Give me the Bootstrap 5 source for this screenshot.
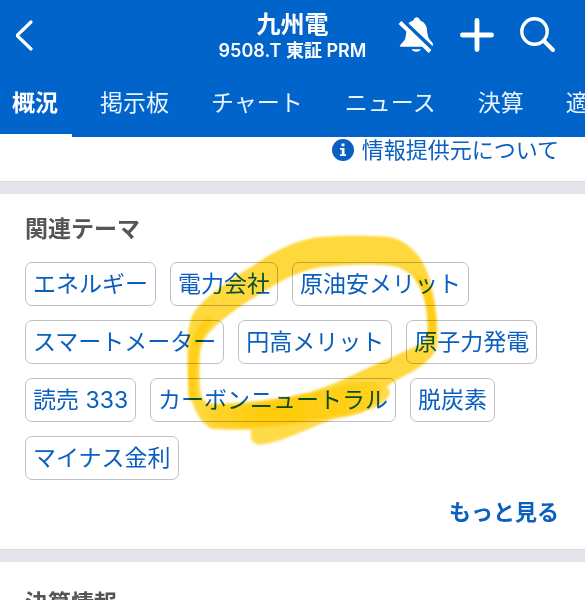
<!DOCTYPE html>
<html lang="ja">
<head>
<meta charset="utf-8">
<meta name="viewport" content="width=device-width, initial-scale=1">
<title>九州電 9508.T</title>
<link href="https://cdn.jsdelivr.net/npm/bootstrap@5.3.0/dist/css/bootstrap.min.css" rel="stylesheet">
<style>
body{font-family:Inter,"Noto Sans CJK JP",sans-serif;color:#555;background:#fff}
.app-head{background:#0064cb;color:#fff}
.title-bar{display:grid;grid-template-columns:1fr auto 1fr;height:70px}
.icon-btn{background:none;border:0;padding:0;color:#fff;line-height:0}
.actions{gap:25px;padding-right:29px}
.stock-name{font-size:24px;line-height:28px;font-weight:700;margin:0}
.stock-code{font-size:18px;line-height:24px;font-weight:600}
.tab-row{gap:16px;height:67px}
.tab-row a{color:#e9f3ff;font-size:23px;line-height:62px;padding:2px 14px 0 12px;white-space:nowrap;text-decoration:none;border-bottom:3px solid transparent}
.tab-row a.active{color:#fff;font-weight:700;border-color:#fff}
.info-row{height:44px;padding:0 26px}
.info-row a{font-size:22px;line-height:26px;gap:8px}
.blue-link{color:#0a5fc0;text-decoration:none}
.band{height:13px;background:#e5e4ea;border-top:1px solid #d9d9dd}
.panel{padding:18px 25px 20px}
.panel-title{font-size:23px;line-height:34px;font-weight:700;margin:0 0 16px}
.tags{gap:14px}
.tag{color:#0a5fc0;font-size:23px;line-height:42px;padding:0 7px;border:1px solid #bfbfc5;border-radius:7px;text-decoration:none;white-space:nowrap}
.more{font-size:22px;line-height:34px;font-weight:700;margin:15px 1px 0}
.marker{left:160px;top:26px;mix-blend-mode:multiply;pointer-events:none}
</style>
<script src="https://cdn.jsdelivr.net/npm/bootstrap@5.3.0/dist/js/bootstrap.bundle.min.js"></script>
</head>
<body class="vh-100 overflow-hidden">
<header class="app-head">
  <div class="title-bar align-items-center">
    <button class="icon-btn text-start ps-3" type="button" aria-label="戻る">
      <svg width="20" height="32" viewBox="0 0 20 32" fill="none" stroke="currentColor" stroke-width="3.2" stroke-linecap="round" stroke-linejoin="round"><path d="M15 3 1 16.500 15 30"/></svg>
    </button>
    <div class="text-center text-nowrap pt-1">
      <h1 class="stock-name">九州電</h1>
      <div class="stock-code">9508.T 東証 PRM</div>
    </div>
    <div class="d-flex justify-content-end actions">
      <button class="icon-btn" type="button" aria-label="通知オフ">
        <svg width="36" height="36" viewBox="0 0 36 36"><path fill="currentColor" d="M2 29.800c-1-1.600 3.500-4.500 5-7.500 1.300-3 .8-8 2-11C10.300 7 12.500 4.800 15.500 3.500c.4-2 1.600-3 3.200-3s2.800 1 3.200 3c4.500 1.500 6.800 5.500 7.100 10 .2 5 1.200 8.200 4.700 11.500 1.700 1.800 1.300 4.800-.5 4.800H3c-.5 0-.8-.2-1-.5zM13.500 32.300h9.500c-1.200 3.200-8.300 3.200-9.500 0z"/><path fill="#0064cb" d="M1 3.500 5 1l31 29v6h-4z"/><path stroke="currentColor" stroke-width="4" d="M2 5.500 32 34.500"/><path fill="currentColor" d="M10.500 6.200C12 4.600 13.700 4 15.500 3.500c.4-2 1.600-3 3.200-3s2.800 1 3.200 3c4.500 1.500 6.800 5.500 7.100 10 .2 5 1.200 8.200 4.700 11.500 1.200 1.300 1.300 3 .8 4z"/></svg>
      </button>
      <button class="icon-btn" type="button" aria-label="追加">
        <svg width="36" height="36" viewBox="0 0 36 36" stroke="currentColor" stroke-width="4.800" stroke-linecap="round"><path d="M18 3.400v29.200M3.400 18h29.200"/></svg>
      </button>
      <button class="icon-btn" type="button" aria-label="検索">
        <svg width="36" height="36" viewBox="0 0 36 36" fill="none" stroke="currentColor" stroke-linecap="round"><circle cx="14.500" cy="14.500" r="12.700" stroke-width="3.400"/><path stroke-width="4" d="m24.500 24.500 8.500 8.500"/></svg>
      </button>
    </div>
  </div>
  <nav class="tab-row d-flex overflow-hidden">
    <a href="#" class="active">概況</a><a href="#">掲示板</a><a href="#">チャート</a><a href="#">ニュース</a><a href="#">決算</a><a href="#">適</a>
  </nav>
</header>
<main>
  <div class="info-row d-flex justify-content-end align-items-start">
    <a href="#" class="blue-link d-flex align-items-center"><svg width="22" height="22" viewBox="0 0 22 22"><circle cx="11" cy="11" r="11" fill="#0a5fc0"/><path fill="#fff" d="M9.500 4.500h3v2.800h-3zM8 9h4.500v6.300H14V17H8v-1.700h1.800v-4.600H8z"/></svg>情報提供元について</a>
  </div>
  <div class="band"></div>
  <section class="panel position-relative">
    <h2 class="panel-title">関連テーマ</h2>
    <div class="tags d-flex flex-wrap">
      <a class="tag" href="#">エネルギー</a>
      <a class="tag" href="#">電力会社</a>
      <a class="tag" href="#">原油安メリット</a>
      <a class="tag" href="#">スマートメーター</a>
      <a class="tag" href="#">円高メリット</a>
      <a class="tag" href="#">原子力発電</a>
      <a class="tag" href="#">読売 333</a>
      <a class="tag" href="#">カーボンニュートラル</a>
      <a class="tag" href="#">脱炭素</a>
      <a class="tag" href="#">マイナス金利</a>
    </div>
    <div class="more text-end"><a href="#" class="blue-link">もっと見る</a></div>
    <svg class="marker position-absolute" width="300" height="240" viewBox="0 0 900 720" aria-hidden="true">
      <defs>
        <filter id="soft"><feGaussianBlur stdDeviation="3"/></filter>
        <linearGradient id="tail"><stop offset="0" stop-color="#ffd534"/><stop offset=".35" stop-color="#ffcc0a"/><stop offset="1" stop-color="#ffd020"/></linearGradient>
      </defs>
      <g filter="url(#soft)">
        <path fill="#ffd83c" fill-rule="evenodd" d="M160 628C110 610 82 530 82 430C82 350 84 315 98 285C125 235 210 180 290 130C350 88 415 58 480 51C550 46 620 46 680 50C740 56 785 105 805 165C825 225 836 310 832 370C828 415 780 445 710 480C660 505 640 570 590 583C550 595 510 595 460 607C390 628 250 632 160 628ZM119 440C118 500 119 535 140 548C180 556 280 545 360 533C440 525 520 495 610 450C690 413 760 385 790 366C807 354 804 310 799 270C790 205 765 163 715 142C670 129 560 132 480 142C410 154 350 190 290 228C230 265 160 315 135 355C122 375 119 400 119 440Z"/>
        <path fill="#ffda48" d="M264 600C360 575 470 545 570 510C640 488 690 490 690 520C670 570 580 585 520 597C450 622 360 670 300 674C270 672 270 650 274 628Z"/>
        <path fill="url(#tail)" d="M130 548C210 568 300 545 390 533C470 520 550 490 625 485C695 490 665 555 600 577C540 592 490 594 440 606C350 622 240 628 160 618C140 600 130 575 130 548Z"/>
        <path fill="none" stroke="#ffce12" stroke-width="24" stroke-linecap="round" d="M98 530C91 420 103 340 145 305M780 180C806 215 816 270 816 345"/>
      </g>
    </svg>
  </section>
  <div class="band"></div>
  <section class="panel pt-4"><h2 class="panel-title">決算情報</h2></section>
</main>
</body>
</html>
